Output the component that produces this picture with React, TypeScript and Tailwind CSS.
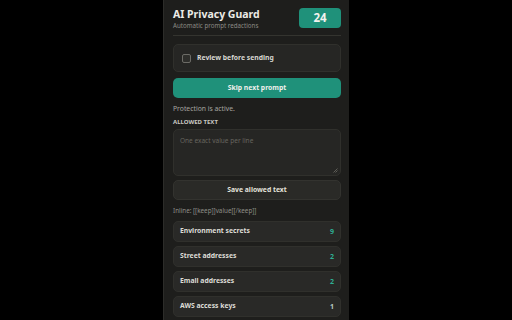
import React from "react";

const rows = [
	{ name: "Environment secrets", count: 9, teal: true },
	{ name: "Street addresses", count: 2, teal: true },
	{ name: "Email addresses", count: 2, teal: true },
	{ name: "AWS access keys", count: 1, teal: false },
];

export default function App() {
	return (
		<div className="w-[512px] h-[320px] bg-black overflow-hidden flex leading-none" style={{ fontFamily: '"Noto Sans", "Open Sans", sans-serif' }}>
			<div className="ml-[163px] w-[186px] h-[320px] bg-[#1e1e1c] border-l border-[#2c2c29] pl-[9px] pr-[8px] flex flex-col">
				<div className="flex justify-between items-start pt-[8px] h-[36px] border-b border-[#34342f]">
					<div className="flex flex-col">
						<span className="text-[10.5px] font-bold text-[#ecebe6] leading-[12px]">AI Privacy Guard</span>
						<span className="text-[6.2px] text-[#8c8b85] leading-[9px] mt-[1px]">Automatic prompt redactions</span>
					</div>
					<div className="w-[42px] h-[20px] rounded-[4px] bg-[#1f917a] flex items-center justify-center text-[11.5px] font-bold text-[#f2f2ee]">24</div>
				</div>
				<div className="mt-[8px] h-[28px] rounded-[5px] bg-[#262624] border border-[#30302c] flex items-center pl-[8px] gap-[6px]">
					<div className="w-[9px] h-[9px] rounded-[2px] border border-[#6c6b66] bg-[#2e2e2b]" />
					<span className="text-[6.8px] font-bold text-[#d8d7d1]">Review before sending</span>
				</div>
				<div className="mt-[6px] h-[20px] rounded-[5px] bg-[#1f917a] flex items-center justify-center text-[6.8px] font-bold text-[#eef0ec]">Skip next prompt</div>
				<div className="mt-[6px] text-[6.8px] text-[#a7a6a0] leading-[9px]">Protection is active.</div>
				<div className="mt-[5px] text-[6px] font-bold text-[#c9c8c2] leading-[9px]">ALLOWED TEXT</div>
				<div className="mt-[2px] h-[47px] rounded-[5px] bg-[#262624] border border-[#30302c] relative px-[6px] pt-[3px] leading-[9px]">
					<span className="text-[6.5px] text-[#66655f]">One exact value per line</span>
					<svg className="absolute right-[2px] bottom-[2px]" width="5" height="5" viewBox="0 0 5 5">
						<path d="M4.5 0.5 L0.5 4.5 M4.5 2.5 L2.5 4.5" stroke="#77766f" strokeWidth="0.7" />
					</svg>
				</div>
				<div className="mt-[4px] h-[20px] rounded-[5px] bg-[#2a2a27] border border-[#33332f] flex items-center justify-center text-[6.8px] font-bold text-[#e2e1db]">Save allowed text</div>
				<div className="mt-[6px] text-[6.3px] text-[#8f8e88] leading-[9px]">Inline: [[keep]]value[[/keep]]</div>
				<div className="mt-[6px] flex flex-col gap-[4px]">
					{rows.map((r) => (
						<div key={r.name} className="h-[21px] rounded-[5px] bg-[#292927] border border-[#30302c] flex items-center justify-between pl-[6px] pr-[6px]">
							<span className="text-[6.8px] font-bold text-[#dddcd6]">{r.name}</span>
							<span className={`text-[7px] font-bold ${r.teal ? "text-[#2fae93]" : "text-[#b9c9c2]"}`}>{r.count}</span>
						</div>
					))}
				</div>
			</div>
		</div>
	);
}
